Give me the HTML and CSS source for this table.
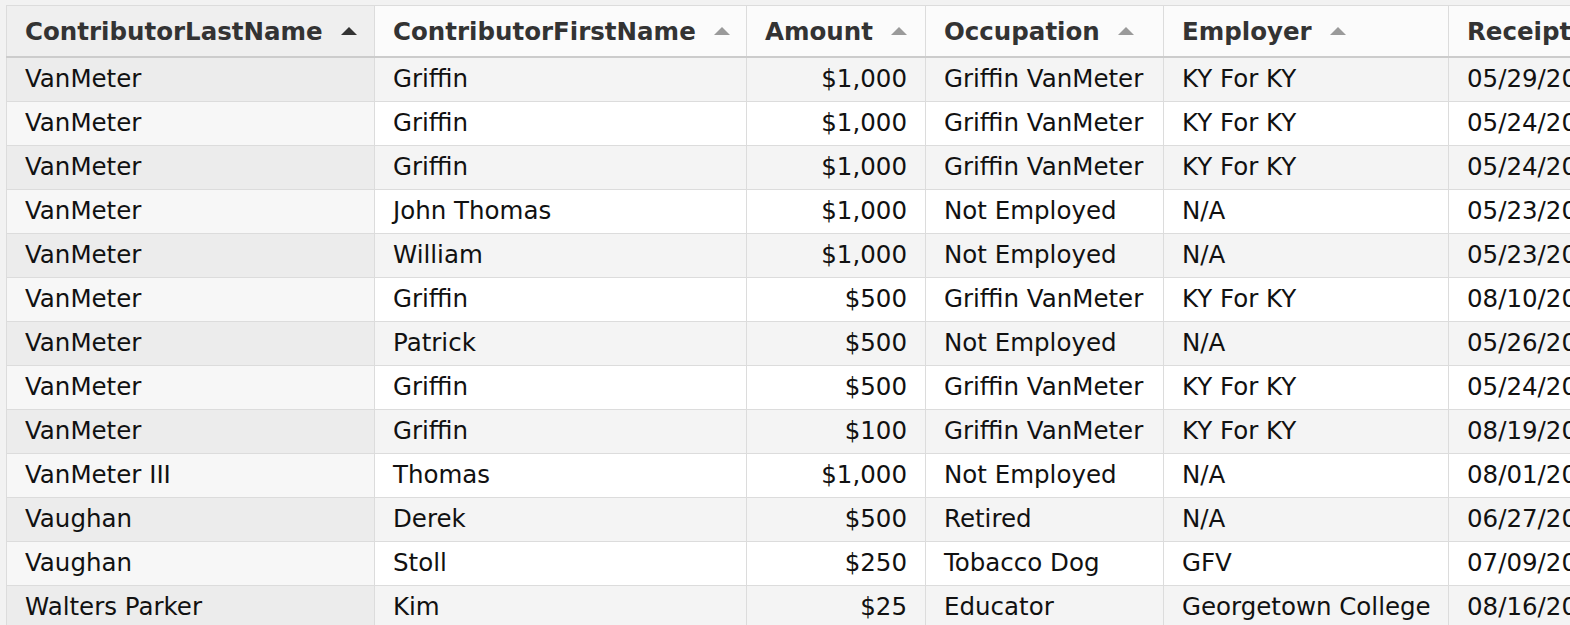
FILE: index.html
```html
<!DOCTYPE html>
<html>
<head>
<meta charset="utf-8">
<link rel="stylesheet" href="styles.css">
</head>
<body>
<div class="wrap">
<table class="grid">
<colgroup>
<col class="c1"><col class="c2"><col class="c3"><col class="c4"><col class="c5"><col class="c6">
</colgroup>
<thead>
<tr>
<th class="sorted"><span class="hd">ContributorLastName<i class="arrow dark"></i></span></th>
<th><span class="hd">ContributorFirstName<i class="arrow"></i></span></th>
<th><span class="hd">Amount<i class="arrow"></i></span></th>
<th><span class="hd">Occupation<i class="arrow"></i></span></th>
<th><span class="hd">Employer<i class="arrow"></i></span></th>
<th><span class="hd">ReceiptDate<i class="arrow"></i></span></th>
</tr>
</thead>
<tbody>
<tr><td class="sorted">VanMeter</td><td>Griffin</td><td class="num">$1,000</td><td>Griffin VanMeter</td><td>KY For KY</td><td>05/29/2023</td></tr>
<tr><td class="sorted">VanMeter</td><td>Griffin</td><td class="num">$1,000</td><td>Griffin VanMeter</td><td>KY For KY</td><td>05/24/2023</td></tr>
<tr><td class="sorted">VanMeter</td><td>Griffin</td><td class="num">$1,000</td><td>Griffin VanMeter</td><td>KY For KY</td><td>05/24/2023</td></tr>
<tr><td class="sorted">VanMeter</td><td>John Thomas</td><td class="num">$1,000</td><td>Not Employed</td><td>N/A</td><td>05/23/2023</td></tr>
<tr><td class="sorted">VanMeter</td><td>William</td><td class="num">$1,000</td><td>Not Employed</td><td>N/A</td><td>05/23/2023</td></tr>
<tr><td class="sorted">VanMeter</td><td>Griffin</td><td class="num">$500</td><td>Griffin VanMeter</td><td>KY For KY</td><td>08/10/2023</td></tr>
<tr><td class="sorted">VanMeter</td><td>Patrick</td><td class="num">$500</td><td>Not Employed</td><td>N/A</td><td>05/26/2023</td></tr>
<tr><td class="sorted">VanMeter</td><td>Griffin</td><td class="num">$500</td><td>Griffin VanMeter</td><td>KY For KY</td><td>05/24/2023</td></tr>
<tr><td class="sorted">VanMeter</td><td>Griffin</td><td class="num">$100</td><td>Griffin VanMeter</td><td>KY For KY</td><td>08/19/2023</td></tr>
<tr><td class="sorted">VanMeter III</td><td>Thomas</td><td class="num">$1,000</td><td>Not Employed</td><td>N/A</td><td>08/01/2023</td></tr>
<tr><td class="sorted">Vaughan</td><td>Derek</td><td class="num">$500</td><td>Retired</td><td>N/A</td><td>06/27/2023</td></tr>
<tr><td class="sorted">Vaughan</td><td>Stoll</td><td class="num">$250</td><td>Tobacco Dog</td><td>GFV</td><td>07/09/2023</td></tr>
<tr><td class="sorted">Walters Parker</td><td>Kim</td><td class="num">$25</td><td>Educator</td><td>Georgetown College</td><td>08/16/2023</td></tr>
</tbody>
</table>
</div>
</body>
</html>
```
FILE: styles.css
```css
html, body {
  margin: 0;
  padding: 0;
  background: #f2f2f2;
  overflow: hidden;
  width: 1570px;
  height: 625px;
}
.wrap {
  padding: 5px 0 0 6px;
}
.grid {
  border-collapse: collapse;
  table-layout: fixed;
  width: 1800px;
  font-family: "DejaVu Sans", sans-serif;
  font-size: 24.5px;
  color: #111;
  background: #fff;
}
.c1 { width: 368px; }
.c2 { width: 372px; }
.c3 { width: 179px; }
.c4 { width: 238px; }
.c5 { width: 285px; }
.c6 { width: 358px; }
.grid th, .grid td {
  border: 1px solid #dcdcdc;
  padding: 0 18px;
  text-align: left;
  white-space: nowrap;
  overflow: hidden;
}
.grid th {
  height: 50px;
  font-weight: bold;
  color: #333;
  background: #fbfbfb;
  border-bottom: 2px solid #cccccc;
}
.grid th.sorted { background: #efefef; }
.hd {
  display: inline-flex;
  align-items: center;
}
.arrow {
  display: inline-block;
  width: 0;
  height: 0;
  margin-left: 18px;
  border-left: 8px solid transparent;
  border-right: 8px solid transparent;
  border-bottom: 8px solid #9a9a9a;
}
.arrow.dark { border-bottom-color: #333; }
.grid td {
  height: 40px;
  padding-bottom: 3px;
}
.grid tbody tr:nth-child(odd) td { background: #f4f4f4; }
.grid tbody tr:nth-child(odd) td.sorted { background: #ececec; }
.grid tbody tr:nth-child(even) td { background: #ffffff; }
.grid tbody tr:nth-child(even) td.sorted { background: #f7f7f7; }
.grid td.num { text-align: right; }
```
